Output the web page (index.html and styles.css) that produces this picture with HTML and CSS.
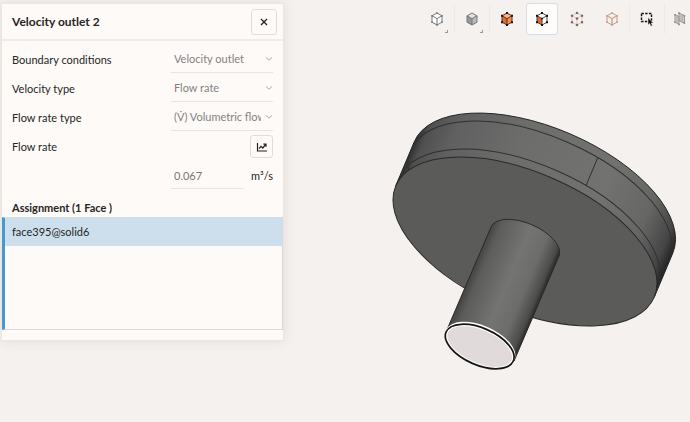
FILE: index.html
```html
<!DOCTYPE html>
<html lang="en">
<head>
<meta charset="utf-8">
<title>Velocity outlet 2</title>
<link rel="stylesheet" href="styles.css">
</head>
<body>
<svg class="defs" aria-hidden="true">
  <defs>
    <symbol id="chevron" viewBox="0 0 8 6"><path d="M1 1.5 4 4.2 7 1.5" fill="none" stroke="currentColor"/></symbol>
    <symbol id="cube-edges" viewBox="0 0 16 16"><path d="M8 2 13 4.8V11.2L8 14 3 11.2V4.8ZM3 4.8 8 7.6 13 4.8M8 7.6V14" fill="none" stroke-linejoin="round"/></symbol>
    <symbol id="cube-dots" viewBox="0 0 16 16"><path d="M8 .7a1.3 1.3 0 1 1 0 2.6 1.3 1.3 0 0 1 0-2.6M13 3.5a1.3 1.3 0 1 1 0 2.6 1.3 1.3 0 0 1 0-2.6M13 9.9a1.3 1.3 0 1 1 0 2.6 1.3 1.3 0 0 1 0-2.6M8 12.7a1.3 1.3 0 1 1 0 2.6 1.3 1.3 0 0 1 0-2.6M3 9.9a1.3 1.3 0 1 1 0 2.6 1.3 1.3 0 0 1 0-2.6M3 3.5a1.3 1.3 0 1 1 0 2.6 1.3 1.3 0 0 1 0-2.6M8 6.3a1.3 1.3 0 1 1 0 2.6 1.3 1.3 0 0 1 0-2.6"/></symbol>
  </defs>
</svg>
<main class="workspace">
  <section class="panel">
    <header class="panel-header">
      <h1 class="title">Velocity outlet 2</h1>
      <button class="icon-button close" aria-label="Close">
        <svg class="glyph" viewBox="0 0 12 12"><path d="M3 3 9 9M9 3 3 9" fill="none" stroke="#222" stroke-width="1.3"/></svg>
      </button>
    </header>
    <form class="fields">
      <div class="row">
        <label for="condition">Boundary conditions</label>
        <div class="select"><select id="condition"><option>Velocity outlet</option></select><svg class="chevron"><use href="#chevron"/></svg></div>
      </div>
      <div class="row">
        <label for="velocity">Velocity type</label>
        <div class="select"><select id="velocity"><option>Flow rate</option></select><svg class="chevron"><use href="#chevron"/></svg></div>
      </div>
      <div class="row">
        <label for="flow-type">Flow rate type</label>
        <div class="select"><select id="flow-type"><option>(V̇) Volumetric flow</option></select><svg class="chevron"><use href="#chevron"/></svg></div>
      </div>
      <div class="row">
        <label for="flow">Flow rate</label>
        <button type="button" class="icon-button chart" aria-label="Table input">
          <svg class="glyph" viewBox="0 0 12 12"><path d="M1.5 2V10H11M3 7.7 5 5.3 6.8 7 9.6 3.6M7.4 3.2H10V5.8" fill="none" stroke="#222" stroke-width="1.2"/></svg>
        </button>
      </div>
      <div class="row value-row">
        <div class="value"><input id="flow" type="text" value="0.067"><span class="unit">m³/s</span></div>
      </div>
    </form>
    <h2 class="assignment">Assignment (1 Face )</h2>
    <ul class="faces"><li class="face">face395@solid6</li></ul>
  </section>
  <section class="viewer">
    <nav class="toolbar" aria-label="View tools">
      <button class="tool divided" aria-label="Wireframe"><svg class="icon" viewBox="0 0 16 16"><path d="M8 2 13 4.8V11.2L8 14 3 11.2V4.8Z" fill="#fff"/><use href="#cube-edges" stroke="#777"/><path d="M7.2 1.2H8.8V2.6H7.2ZM2.2 4H3.8V5.6H2.2ZM12.2 4H13.8V5.6H12.2ZM2.2 10.4H3.8V12H2.2ZM12.2 10.4H13.8V12H12.2ZM7.2 13.3H8.8V14.8H7.2Z" fill="#777"/></svg><i class="corner"></i></button>
      <button class="tool divided" aria-label="Solid"><svg class="icon" viewBox="0 0 16 16"><path d="M8 2 13 4.8V11.2L8 14 3 11.2V4.8Z" fill="#bbb"/><path d="M3 4.8 8 7.6V14L3 11.2Z" fill="#999"/><path d="M8 2 13 4.8 8 7.6 3 4.8Z" fill="#e4e4e4"/><use href="#cube-edges" stroke="#777"/></svg><i class="corner"></i></button>
      <button class="tool" aria-label="Select volumes"><svg class="icon" viewBox="0 0 16 16"><path d="M8 2 13 4.8V11.2L8 14 3 11.2V4.8Z" fill="#f58a4b"/><path d="M3 4.8 8 7.6V14L3 11.2Z" fill="#e8662a"/><path d="M8 2 13 4.8 8 7.6 3 4.8Z" fill="#fbb58e"/><use href="#cube-edges" stroke="#593b2c"/><path d="M7 1H9V3H7ZM2 3.8H4V5.8H2ZM12 3.8H14V5.8H12ZM2 10.2H4V12.2H2ZM12 10.2H14V12.2H12ZM7 13H9V15H7Z" fill="#161616"/></svg></button>
      <button class="tool active" aria-label="Select faces" aria-pressed="true"><svg class="icon" viewBox="0 0 16 16"><path d="M8 2 13 4.8V11.2L8 14 3 11.2V4.8Z" fill="#fff"/><path d="M3 4.8 8 7.6V14L3 11.2Z" fill="#ee6425"/><use href="#cube-edges" stroke="#444"/><path d="M7 1H9V3H7ZM2 3.8H4V5.8H2ZM12 3.8H14V5.8H12ZM2 10.2H4V12.2H2ZM12 10.2H14V12.2H12ZM7 13H9V15H7ZM7.2 6.8H8.8V8.4H7.2Z" fill="#111"/></svg></button>
      <button class="tool" aria-label="Select vertices"><svg class="icon" viewBox="0 0 16 16"><use href="#cube-edges" stroke="#e8c3b3"/><use href="#cube-dots" fill="#707070"/></svg></button>
      <button class="tool divided" aria-label="Select edges"><svg class="icon" viewBox="0 0 16 16"><use href="#cube-edges" stroke="#a9a3a0"/><path d="M3 4.8 8 7.6 13 4.8M8 7.6V14" fill="none" stroke="#eda17f"/><path d="M7.2 1.2H8.8V2.8H7.2ZM2.2 4H3.8V5.6H2.2ZM12.2 4H13.8V5.6H12.2ZM2.2 10.4H3.8V12H2.2ZM12.2 10.4H13.8V12H12.2ZM7.2 13.3H8.8V14.8H7.2Z" fill="#ec8a60"/></svg></button>
      <button class="tool divided" aria-label="Box selection"><svg class="icon" viewBox="0 0 16 16"><path d="M2.5 2.5H12.5V10.5H2.5Z" fill="none" stroke="#111" stroke-width="1.4" stroke-dasharray="2.4 1.3"/><path d="M9 6.6V14L10.7 12.5 11.9 15.2 13.4 14.5 12.2 12H14.4Z" fill="#111" stroke="#f5f1ee" stroke-width=".5"/></svg></button>
      <button class="tool last" aria-label="Hidden parts"><svg class="icon" viewBox="0 0 16 16"><path d="M3 3.6 7 5.6V13.4L3 11.2ZM7 2 12.5 4.6V12.4L7 9.8Z" fill="#d5d2d1" stroke="#999"/><path d="M9 3V10.6M10.7 4V11.4M5 4.8V12" stroke="#aaa"/><path d="M6.2 1.2H7.8V2.8H6.2ZM11.7 4H13.2V5.5H11.7ZM11.7 11.2H13.2V12.8H11.7ZM2.2 3H3.7V4.5H2.2ZM2.2 10.5H3.7V12H2.2ZM6.2 12.7H7.8V14.2H6.2Z" fill="#888"/></svg></button>
    </nav>
    <svg class="model" viewBox="283 38 407 384" role="img" aria-label="Disc with outlet pipe">
      <defs>
        <linearGradient id="rim" gradientUnits="userSpaceOnUse" x1="405" y1="164" x2="664" y2="275">
          <stop offset="0" stop-color="#303030"/><stop offset=".03" stop-color="#505050"/><stop offset=".12" stop-color="#606060"/><stop offset=".35" stop-color="#6d6d6c"/><stop offset=".68" stop-color="#727271"/><stop offset=".86" stop-color="#666665"/><stop offset=".96" stop-color="#454545"/><stop offset="1" stop-color="#222"/>
        </linearGradient>
        <linearGradient id="pipe" gradientUnits="userSpaceOnUse" x1="468" y1="280" x2="537" y2="309">
          <stop offset="0" stop-color="#434342"/><stop offset=".12" stop-color="#5c5c5b"/><stop offset=".5" stop-color="#747472"/><stop offset=".75" stop-color="#6c6c6a"/><stop offset=".93" stop-color="#4b4b4a"/><stop offset="1" stop-color="#252525"/>
        </linearGradient>
        <clipPath id="rim-clip"><path d="M395.7 185.9 414.2 141.9A140.7 69 23.4 0 1 672.8 253.1L654.3 297.1Z"/></clipPath>
      </defs>
      <path d="M395.7 185.9 414.2 141.9A140.7 69 23.4 0 1 672.8 253.1L654.3 297.1Z" fill="url(#rim)" stroke="#242424"/>
      <g clip-path="url(#rim-clip)" fill="none" stroke="#303030">
        <ellipse cx="540" cy="205.5" rx="140.7" ry="69" transform="rotate(23.4 540 205.5)"/>
        <ellipse cx="528.4" cy="233.5" rx="140.7" ry="69" transform="rotate(23.4 528.4 233.5)"/>
        <path d="M597.6 158 586.3 185"/>
      </g>
      <ellipse cx="525" cy="241.5" rx="140.7" ry="69" transform="rotate(23.4 525 241.5)" fill="#5b5b59" stroke="#292929"/>
      <path d="M446 332 491 227A36.9 18.1 23.4 0 1 559 256L514 361Z" fill="url(#pipe)" stroke="#2b2b2b"/>
      <ellipse cx="480.4" cy="344.6" rx="37.2" ry="19" transform="rotate(23.4 480.4 344.6)" fill="#fff"/>
      <ellipse cx="479.7" cy="346.5" rx="36.6" ry="18.4" transform="rotate(23.4 479.7 346.5)" fill="#fff" stroke="#161616" stroke-width="1.7"/>
      <ellipse cx="479.7" cy="346.5" rx="34.5" ry="16.4" transform="rotate(23.4 479.7 346.5)" fill="#e1dadb"/>
    </svg>
  </section>
</main>
</body>
</html>
```
FILE: styles.css
```css
* { box-sizing: border-box; }

body {
  margin: 0;
  background: #f5f1ee;
  color: #252525;
  font: 11px/16px Lato, sans-serif;
}

button, input, select { font: inherit; color: inherit; }

.defs { position: absolute; width: 0; height: 0; }

.workspace {
  display: grid;
  grid-template-columns: 283fr 407fr;
  align-items: start;
  min-height: 100vh;
  overflow: hidden;
}

.panel {
  margin: 4px 0 0 2px;
  padding-bottom: 10px;
  background: #fefaf7;
  box-shadow: 0 0 0 1px #e9e6e4, 0 0 12px rgba(80, 60, 50, 0.12);
}

.panel-header {
  display: flex;
  align-items: center;
  justify-content: space-between;
  height: 37px;
  padding: 0 6px 0 10px;
  border-bottom: 2px solid #eeebe9;
}

.title { margin: 0; font-size: 12px; font-weight: 700; }

.icon-button {
  display: grid;
  place-items: center;
  padding: 0;
  background: transparent;
  border: 1px solid #dfdddb;
  border-radius: 3px;
}

.close { width: 26px; height: 26px; }
.chart { width: 23px; height: 23px; }
.glyph { width: 12px; height: 12px; }

.fields { padding: 4px 10px 0; }

.row {
  display: grid;
  grid-template-columns: 159fr 102fr;
  align-items: center;
  height: 29px;
}

.select { position: relative; color: #828282; }

.select select {
  display: block;
  appearance: none;
  width: 100%;
  height: 27px;
  padding: 0 12px 1px 3px;
  background: transparent;
  border: 0;
  border-bottom: 1px solid #e7e4e2;
  border-radius: 0;
}

.chevron {
  position: absolute;
  top: 10px;
  right: 0;
  width: 8px;
  height: 6px;
  color: #aaa;
  pointer-events: none;
}

.chart { justify-self: end; }

.value {
  grid-column: 2;
  display: flex;
  align-items: center;
  justify-content: space-between;
}

.value input {
  width: 72%;
  height: 27px;
  padding: 0 3px;
  color: #777;
  background: transparent;
  border: 0;
  border-bottom: 1px solid #e7e4e2;
}

.assignment {
  margin: 10px 0 1px;
  padding-left: 10px;
  font-size: 11px;
  font-weight: 700;
}

.faces {
  height: 113px;
  margin: 0;
  padding: 0;
  list-style: none;
  border: 1px solid #d8dadd;
  border-left: 3px solid #4699d3;
}

.face { padding: 6px 7px; background: #cddfec; }

.viewer { min-width: 0; }

.toolbar {
  display: flex;
  gap: 3px;
  height: 38px;
  padding: 3px 0 3px 34%;
  overflow: hidden;
}

.tool {
  position: relative;
  flex: 0 0 32px;
  display: grid;
  place-items: center;
  height: 32px;
  padding: 0;
  background: transparent;
  border: 1px solid transparent;
  border-radius: 3px;
}

.tool.active { background: #fefcfa; border-color: #d5dde7; }
.tool.last { flex-basis: 28px; }

.divided::after {
  content: "";
  position: absolute;
  top: 0;
  right: -3px;
  width: 1px;
  height: 30px;
  background: #edeae7;
}

.icon { width: 16px; height: 16px; }

.corner {
  position: absolute;
  right: 4px;
  bottom: 1px;
  width: 3px;
  height: 3px;
  border: solid #999;
  border-width: 0 1px 1px 0;
}

.model { display: block; width: 100%; }
```
